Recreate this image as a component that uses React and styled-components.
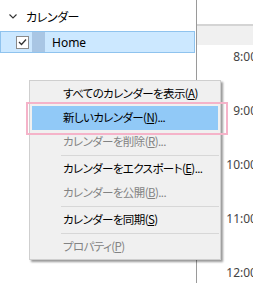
import React from 'react'
import styled, { createGlobalStyle } from 'styled-components'

const GlobalStyle = createGlobalStyle`
  html, body {
    margin: 0;
    padding: 0;
    overflow: hidden;
    background: #fff;
  }
  body {
    font-family: "Noto Sans", "Noto Sans CJK JP", sans-serif;
  }
`

const menuItems = [
  { label: 'すべてのカレンダーを表示', key: 'A' },
  { label: '新しいカレンダー', key: 'N', dots: true, active: true },
  { label: 'カレンダーを削除', key: 'R', dots: true, disabled: true },
  { sep: true },
  { label: 'カレンダーをエクスポート', key: 'E', dots: true },
  { label: 'カレンダーを公開', key: 'B', dots: true, disabled: true },
  { sep: true },
  { label: 'カレンダーを同期', key: 'S' },
  { sep: true },
  { label: 'プロパティ', key: 'P', disabled: true },
]

const hours = ['8:00', '9:00', '10:00', '11:00', '12:00']

export default function App() {
  return (
    <Page>
      <GlobalStyle />
      <LeftPane>
        <GroupHeader>
          <Chevron viewBox="0 0 8 5">
            <path d="M0.5 0.5 L4 4 L7.5 0.5" fill="none" stroke="#333" strokeWidth="1.1" />
          </Chevron>
          <span>カレンダー</span>
        </GroupHeader>
        <CalendarRow>
          <CheckBox>
            <svg width="9" height="8" viewBox="0 0 9 8">
              <path d="M1 4 L3.5 6.5 L8 1.5" fill="none" stroke="#333" strokeWidth="1.3" />
            </svg>
          </CheckBox>
          <Swatch />
          <RowLabel>Home</RowLabel>
        </CalendarRow>
      </LeftPane>

      <RightPane>
        <DayHeader />
        <AllDayBand />
        {hours.map(h => (
          <TimeSlot key={h}>
            <TimeLabel>{h}</TimeLabel>
          </TimeSlot>
        ))}
      </RightPane>

      <ContextMenu>
        {menuItems.map((item, i) =>
          item.sep ? (
            <Separator key={i} />
          ) : (
            <MenuItem key={i} $active={item.active} $disabled={item.disabled}>
              {item.label}(<u>{item.key}</u>){item.dots ? '...' : ''}
            </MenuItem>
          )
        )}
      </ContextMenu>
    </Page>
  )
}

const Page = styled.div`
  position: relative;
  display: flex;
  width: 253px;
  height: 283px;
  overflow: hidden;
`

const LeftPane = styled.div`
  flex: 0 0 196px;
  border-right: 1px solid #9a9a9a;
  display: flex;
  flex-direction: column;
`

const GroupHeader = styled.div`
  display: flex;
  align-items: center;
  height: 20px;
  margin-top: 6px;
  padding-left: 9px;
  gap: 9px;
  font-family: "Noto Sans CJK JP", sans-serif;
  font-size: 12px;
  font-feature-settings: "palt";
  letter-spacing: -0.4px;
  color: #000;
`

const Chevron = styled.svg`
  width: 8px;
  height: 5px;
`

const CalendarRow = styled.div`
  display: flex;
  align-items: center;
  height: 20px;
  margin-top: 5px;
  margin-right: 1px;
  background: #cce8ff;
  border: 1px solid #8fc3ee;
`

const CheckBox = styled.div`
  width: 11px;
  height: 11px;
  margin-left: 15px;
  border: 1px solid #8a8a8a;
  background: #fff;
  display: flex;
  align-items: center;
  justify-content: center;
`

const Swatch = styled.div`
  width: 13px;
  align-self: stretch;
  margin-left: 3px;
  background: #a9c6e4;
`

const RowLabel = styled.span`
  margin-left: 7px;
  font-size: 12px;
  color: #000;
`

const RightPane = styled.div`
  flex: 0 0 60px;
  display: flex;
  flex-direction: column;
  overflow: hidden;
`

const DayHeader = styled.div`
  flex: 0 0 24px;
  border-bottom: 2px solid #d4d4d4;
`

const AllDayBand = styled.div`
  flex: 0 0 19px;
  background: #f0f0f0;
`

const TimeSlot = styled.div`
  flex: 0 0 54px;
  padding-top: 5px;
  box-sizing: border-box;
`

const TimeLabel = styled.div`
  text-align: right;
  font-size: 12px;
  line-height: 14px;
  color: #444;
`

const ContextMenu = styled.div`
  position: absolute;
  left: 29px;
  top: 80px;
  width: 190px;
  padding: 1px 0 0;
  background: #f0f0f0;
  border: 1px solid #cfcfcf;
  box-shadow: 2px 2px 2px rgba(0, 0, 0, 0.4);
  font-family: "Noto Sans CJK JP", sans-serif;
  font-size: 11.5px;
  font-feature-settings: "palt";
  letter-spacing: -0.6px;
`

const MenuItem = styled.div`
  position: relative;
  height: 24px;
  line-height: 23px;
  margin: 0 2px;
  padding-left: 31px;
  white-space: nowrap;
  color: ${p => (p.$disabled ? '#838383' : '#000')};
  background: ${p => (p.$active ? '#91c9f7' : 'transparent')};

  u {
    text-underline-offset: 1px;
  }

  ${p =>
    p.$active &&
    `
    &::after {
      content: '';
      position: absolute;
      left: -6px;
      right: -10px;
      top: -4px;
      bottom: -5px;
      border: 2px solid #f5b3c9;
    }
  `}
`

const Separator = styled.div`
  height: 1px;
  margin: 1px 1px 1px 31px;
  background: #d7d7d7;
`
